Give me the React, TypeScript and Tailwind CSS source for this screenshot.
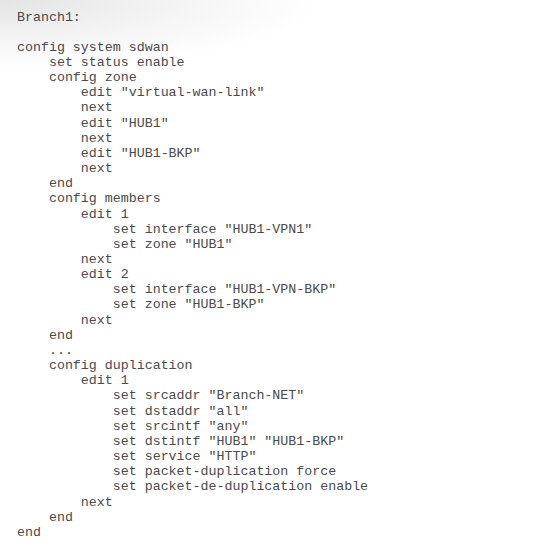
import React from "react";

const lines = [
  "Branch1:",
  "",
  "config system sdwan",
  "    set status enable",
  "    config zone",
  '        edit "virtual-wan-link"',
  "        next",
  '        edit "HUB1"',
  "        next",
  '        edit "HUB1-BKP"',
  "        next",
  "    end",
  "    config members",
  "        edit 1",
  '            set interface "HUB1-VPN1"',
  '            set zone "HUB1"',
  "        next",
  "        edit 2",
  '            set interface "HUB1-VPN-BKP"',
  '            set zone "HUB1-BKP"',
  "        next",
  "    end",
  "    ...",
  "    config duplication",
  "        edit 1",
  '            set srcaddr "Branch-NET"',
  '            set dstaddr "all"',
  '            set srcintf "any"',
  '            set dstintf "HUB1" "HUB1-BKP"',
  '            set service "HTTP"',
  "            set packet-duplication force",
  "            set packet-de-duplication enable",
  "        next",
  "    end",
  "end",
];

export default function App() {
  return (
    <div className="w-[552px] h-[552px] overflow-hidden bg-white bg-[radial-gradient(ellipse_320px_70px_at_0_0,#e4e4e4,#f4f4f4_55%,#ffffff_100%)]">
      <pre
        className="pl-[17px] pt-[9.5px] m-0 text-[13.3px] leading-[15.16px] text-[#4a4a4a]"
        style={{ fontFamily: '"Courier New", Courier, "Liberation Mono", monospace' }}
      >
        {lines.map((l, i) => (
          <div key={i} className="h-[15.16px]">
            {l || "\u00a0"}
          </div>
        ))}
      </pre>
    </div>
  );
}
